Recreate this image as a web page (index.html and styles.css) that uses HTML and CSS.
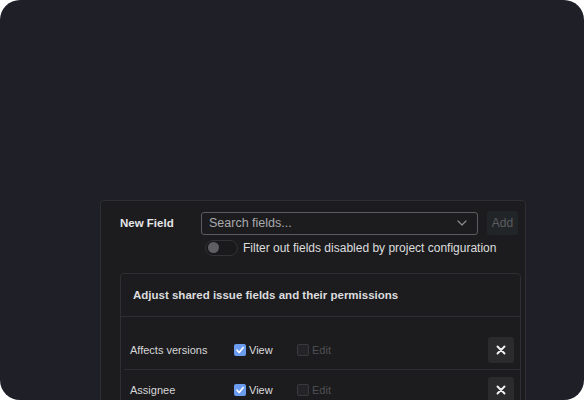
FILE: index.html
```html
<!DOCTYPE html>
<html>
<head>
<meta charset="utf-8">
<link rel="stylesheet" href="styles.css">
</head>
<body>
<div class="frame">
  <div class="panel">
    <div class="field-row">
      <div class="field-label">New Field</div>
      <div class="select">
        <span class="placeholder">Search fields...</span>
        <svg class="chevron" width="10" height="6" viewBox="0 0 10 6"><path d="M1 1 L5 5 L9 1" fill="none" stroke="#8a8a8e" stroke-width="1.2" stroke-linecap="round" stroke-linejoin="round"/></svg>
      </div>
      <div class="add-btn">Add</div>
    </div>
    <div class="toggle-row">
      <div class="toggle"><div class="knob"></div></div>
      <span class="toggle-label">Filter out fields disabled by project configuration</span>
    </div>
    <div class="card">
      <div class="card-header">Adjust shared issue fields and their permissions</div>
      <div class="card-body">
        <div class="row">
          <div class="row-name">Affects versions</div>
          <label class="perm">
            <span class="cb cb-on"><svg width="10" height="10" viewBox="0 0 10 10"><path d="M2 5.2 L4.2 7.5 L8.2 2.5" fill="none" stroke="#fff" stroke-width="1.6" stroke-linecap="round" stroke-linejoin="round"/></svg></span>
            <span class="perm-text">View</span>
          </label>
          <label class="perm perm-disabled">
            <span class="cb cb-off"></span>
            <span class="perm-text">Edit</span>
          </label>
          <div class="remove"><svg width="10" height="10" viewBox="0 0 10 10"><path d="M1.5 1.5 L8.5 8.5 M8.5 1.5 L1.5 8.5" stroke="#f2f2f2" stroke-width="1.9" stroke-linecap="round"/></svg></div>
        </div>
        <div class="row">
          <div class="row-name">Assignee</div>
          <label class="perm">
            <span class="cb cb-on"><svg width="10" height="10" viewBox="0 0 10 10"><path d="M2 5.2 L4.2 7.5 L8.2 2.5" fill="none" stroke="#fff" stroke-width="1.6" stroke-linecap="round" stroke-linejoin="round"/></svg></span>
            <span class="perm-text">View</span>
          </label>
          <label class="perm perm-disabled">
            <span class="cb cb-off"></span>
            <span class="perm-text">Edit</span>
          </label>
          <div class="remove"><svg width="10" height="10" viewBox="0 0 10 10"><path d="M1.5 1.5 L8.5 8.5 M8.5 1.5 L1.5 8.5" stroke="#f2f2f2" stroke-width="1.9" stroke-linecap="round"/></svg></div>
        </div>
      </div>
    </div>
  </div>
</div>
</body>
</html>
```
FILE: styles.css
```css
html, body {
  margin: 0;
  padding: 0;
  background: #ffffff;
}
body {
  font-family: "Liberation Sans", Arial, sans-serif;
  font-size: 12px;
}
.frame {
  width: 584px;
  height: 400px;
  background: #1f1f27;
  border-radius: 20px;
  overflow: hidden;
  box-sizing: border-box;
  padding: 200px 0 0 100px;
}
.panel {
  width: 426px;
  height: 240px;
  box-sizing: border-box;
  background: #1c1c1e;
  border: 1px solid #2f2f33;
  border-radius: 4px;
  padding: 10px 6px 0 19px;
}
.field-row {
  display: flex;
  align-items: center;
  height: 24px;
}
.field-label {
  width: 81px;
  color: #e6e6e8;
  font-weight: bold;
  font-size: 11.5px;
}
.select {
  width: 277px;
  height: 23px;
  box-sizing: border-box;
  border: 1px solid #5b5b60;
  border-radius: 3px;
  display: flex;
  align-items: center;
  justify-content: space-between;
  padding: 0 10px 0 7px;
}
.placeholder {
  color: #a9a9ad;
  font-size: 12.5px;
}
.add-btn {
  margin-left: 9px;
  width: 31px;
  height: 24px;
  background: #222528;
  border-radius: 3px;
  color: #5a5d61;
  font-size: 12px;
  display: flex;
  align-items: center;
  justify-content: center;
}
.toggle-row {
  display: flex;
  align-items: center;
  margin-left: 85px;
  margin-top: 4px;
  height: 17px;
}
.toggle {
  width: 33px;
  height: 16px;
  box-sizing: border-box;
  border: 1px solid #333336;
  border-radius: 8px;
  background: #1a1a1c;
  display: flex;
  align-items: center;
  padding-left: 2px;
}
.knob {
  width: 11px;
  height: 11px;
  border-radius: 50%;
  background: #5f5f63;
}
.toggle-label {
  margin-left: 5px;
  color: #dcdcde;
  font-size: 12px;
}
.card {
  margin-top: 17px;
  width: 401px;
  box-sizing: border-box;
  border: 1px solid #2f2f33;
  border-radius: 4px;
  background: #1c1c1e;
}
.card-header {
  height: 42px;
  display: flex;
  align-items: center;
  padding-left: 12px;
  color: #dcdcde;
  font-weight: bold;
  font-size: 11.5px;
  border-bottom: 1px solid #2f2f33;
}
.card-body {
  padding: 13px 0 0 3px;
}
.row {
  height: 39px;
  display: flex;
  align-items: center;
  border-bottom: 1px solid #2f2f33;
}
.row-name {
  width: 104px;
  padding-left: 6px;
  color: #d6d6d8;
  font-size: 11px;
}
.perm {
  display: flex;
  align-items: center;
  width: 63px;
}
.perm-text {
  margin-left: 3px;
  color: #dcdcde;
  font-size: 11px;
}
.perm-disabled .perm-text {
  color: #4f4f53;
}
.cb {
  width: 12px;
  height: 12px;
  box-sizing: border-box;
  border-radius: 2px;
  display: flex;
  align-items: center;
  justify-content: center;
}
.cb-on {
  background: #6b9cf0;
}
.cb-off {
  border: 1px solid #3a3a3e;
  background: #242426;
}
.remove {
  margin-left: auto;
  margin-right: 6px;
  width: 26px;
  height: 26px;
  background: #2b2b2e;
  border-radius: 3px;
  display: flex;
  align-items: center;
  justify-content: center;
}
```
